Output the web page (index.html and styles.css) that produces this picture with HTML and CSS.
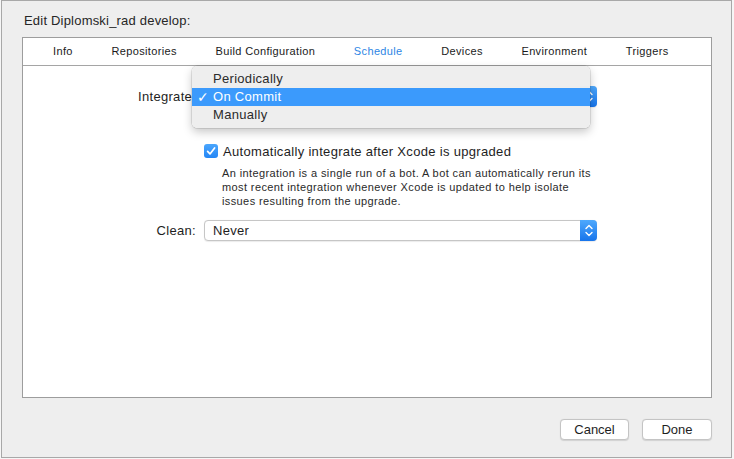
FILE: index.html
```html
<!DOCTYPE html>
<html>
<head>
<meta charset="utf-8">
<link rel="stylesheet" href="styles.css">
</head>
<body>
<div class="sheet">
  <div class="title">Edit Diplomski_rad develop:</div>
  <div class="panel">
    <div class="tabs">
      <span class="tab">Info</span>
      <span class="tab">Repositories</span>
      <span class="tab">Build Configuration</span>
      <span class="tab active">Schedule</span>
      <span class="tab">Devices</span>
      <span class="tab">Environment</span>
      <span class="tab">Triggers</span>
    </div>
    <div class="content">
      <div class="row row-integrate">
        <div class="label">Integrate:</div>
        <div class="popup">
          <span class="popup-value">On Commit</span>
          <span class="stepper"><svg width="16" height="21" viewBox="0 0 16 21"><path d="M5 8.5 L8 5.5 L11 8.5 M5 12.5 L8 15.5 L11 12.5" fill="none" stroke="#fff" stroke-width="1.4" stroke-linecap="round" stroke-linejoin="round"/></svg></span>
        </div>
      </div>
      <div class="check-row">
        <span class="checkbox"><svg width="14" height="14" viewBox="0 0 14 14"><path d="M3.6 7.4 L6 9.9 L10.6 3.9" fill="none" stroke="#fff" stroke-width="1.7" stroke-linecap="round" stroke-linejoin="round"/></svg></span>
        <span class="check-label">Automatically integrate after Xcode is upgraded</span>
      </div>
      <p class="desc">An integration is a single run of a bot. A bot can automatically rerun its<br>most recent integration whenever Xcode is updated to help isolate<br>issues resulting from the upgrade.</p>
      <div class="row row-clean">
        <div class="label">Clean:</div>
        <div class="popup">
          <span class="popup-value">Never</span>
          <span class="stepper"><svg width="16" height="21" viewBox="0 0 16 21"><path d="M5 8.5 L8 5.5 L11 8.5 M5 12.5 L8 15.5 L11 12.5" fill="none" stroke="#fff" stroke-width="1.4" stroke-linecap="round" stroke-linejoin="round"/></svg></span>
        </div>
      </div>
      <div class="menu">
        <div class="menu-item">Periodically</div>
        <div class="menu-item selected"><span class="mark">✓</span>On Commit</div>
        <div class="menu-item">Manually</div>
      </div>
    </div>
  </div>
  <div class="footer">
    <button class="btn btn-cancel">Cancel</button>
    <button class="btn btn-done">Done</button>
  </div>
</div>
</body>
</html>
```

FILE: styles.css
```css
html, body {
  margin: 0;
  padding: 0;
}
body {
  background: #f6f6f6;
  font-family: "Liberation Sans", Arial, sans-serif;
  color: #1e1e1e;
  width: 734px;
  height: 459px;
  overflow: hidden;
}
.sheet {
  box-sizing: border-box;
  margin-left: 1px;
  width: 731px;
  height: 458px;
  background: #eeeeee;
  border: 1px solid #a8a8a8;
  padding: 12px 0 0 20px;
}
.title {
  font-size: 13px;
  line-height: 16px;
  margin-left: 2px;
  letter-spacing: 0.2px;
  color: #262626;
}
.panel {
  box-sizing: border-box;
  margin-top: 8px;
  width: 690px;
  height: 361px;
  background: #fff;
  border: 1px solid #9d9d9d;
  display: flex;
  flex-direction: column;
}
.tabs {
  height: 27px;
  border-bottom: 1px solid #a5a5a5;
  display: flex;
  align-items: center;
  gap: 38.6px;
  padding-left: 30px;
  padding-bottom: 1px;
  box-sizing: border-box;
  height: 28px;
  font-size: 11px;
  letter-spacing: 0.36px;
  color: #1a1a1a;
}
.tab.active {
  color: #2d86e4;
}
.content {
  position: relative;
  flex: 1;
  padding-top: 20px;
}
.row {
  display: flex;
  align-items: center;
  height: 21px;
}
.label {
  width: 173px;
  text-align: right;
  font-size: 13px;
  letter-spacing: 0.3px;
  padding-right: 8px;
  box-sizing: content-box;
  color: #1e1e1e;
}
.popup {
  position: relative;
  box-sizing: border-box;
  width: 393px;
  height: 21px;
  background: #fff;
  border: 1px solid #c6c6c6;
  border-radius: 4px;
  box-shadow: 0 0.5px 1px rgba(0,0,0,0.08);
  display: flex;
  align-items: center;
  justify-content: space-between;
}
.popup-value {
  font-size: 13px;
  letter-spacing: 0.3px;
  padding-left: 8px;
  color: #1e1e1e;
}
.stepper {
  width: 17px;
  height: 21px;
  margin: -1px -1px -1px 0;
  border-radius: 0 4px 4px 0;
  background: linear-gradient(#4ea9fd, #1774eb);
  display: flex;
  align-items: center;
  justify-content: center;
}
.stepper svg {
  display: block;
}
.check-row {
  margin-top: 36px;
  margin-left: 181px;
  display: flex;
  align-items: center;
  height: 16px;
  gap: 5px;
}
.checkbox {
  width: 14px;
  height: 14px;
  border-radius: 3px;
  background: linear-gradient(#4aa6fd, #2486f5);
  display: flex;
}
.checkbox svg {
  display: block;
}
.check-label {
  font-size: 13px;
  letter-spacing: 0.32px;
  color: #1e1e1e;
}
.desc {
  margin: 7px 0 0 199px;
  font-size: 11px;
  line-height: 14px;
  letter-spacing: 0.39px;
  color: #2a2a2a;
}
.row-clean {
  margin-top: 12px;
}
.menu {
  position: absolute;
  left: 169px;
  top: 0;
  width: 398px;
  box-sizing: border-box;
  padding: 4px 0;
  background: rgba(238,238,238,0.98);
  border-radius: 5px;
  box-shadow: 0 0 0 0.5px rgba(0,0,0,0.18), 0 4px 10px rgba(0,0,0,0.22);
}
.menu-item {
  position: relative;
  height: 18px;
  line-height: 18px;
  padding-left: 21px;
  font-size: 13px;
  letter-spacing: 0.3px;
  color: #2b2b2b;
}
.menu-item.selected {
  background: #3b9afc;
  color: #fff;
}
.mark {
  position: absolute;
  left: 5px;
  top: 0;
  font-size: 14px;
  font-weight: bold;
  font-family: "DejaVu Sans", sans-serif;
}
.footer {
  display: flex;
  justify-content: flex-end;
  gap: 13px;
  width: 690px;
  margin-top: 21px;
}
.btn {
  box-sizing: border-box;
  height: 21px;
  background: #fff;
  border: 1px solid #c4c4c4;
  border-radius: 4px;
  box-shadow: 0 0.5px 1px rgba(0,0,0,0.12);
  font-family: "Liberation Sans", Arial, sans-serif;
  font-size: 13px;
  color: #1e1e1e;
  padding: 0;
}
.btn-cancel {
  width: 69px;
}
.btn-done {
  width: 70px;
}
```
